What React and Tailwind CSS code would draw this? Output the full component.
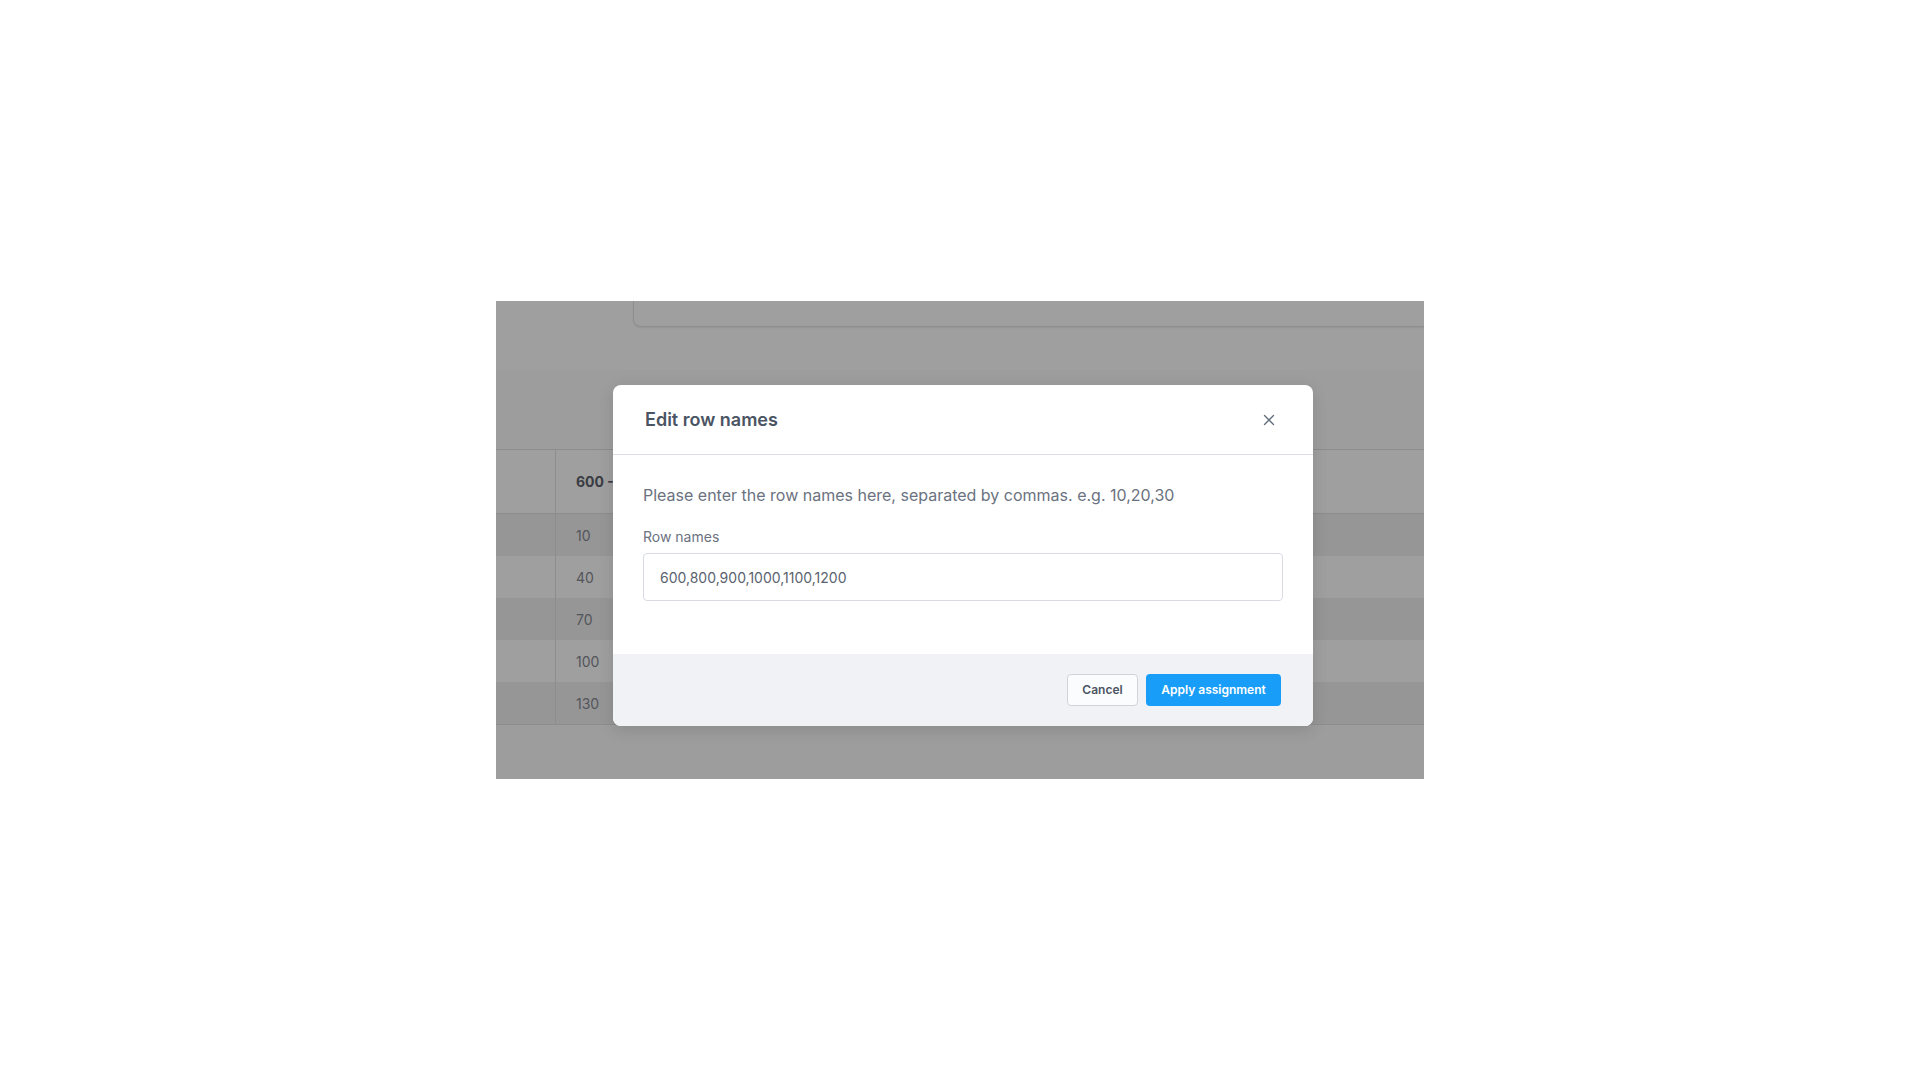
import React from "react";

const rows = ["10", "40", "70", "100", "130"];

function CloseIcon() {
  return (
    <svg width="12" height="12" viewBox="0 0 12 12" fill="none" stroke="currentColor" strokeWidth="1.3" strokeLinecap="round">
      <path d="M1.5 1.5 L10.5 10.5 M10.5 1.5 L1.5 10.5" />
    </svg>
  );
}

export default function App() {
  return (
    <div className="min-h-screen w-full bg-white pt-[301px] pl-[496px]" style={{ fontFamily: "Inter, 'Noto Sans', sans-serif" }}>
      <div className="relative w-[928px] h-[478px] overflow-hidden bg-[#fcfcfc]">
        {/* underlying page */}
        <div className="h-[69px] bg-white pl-[137px]">
          <div className="h-[26px] bg-white rounded-bl-lg border-l border-b border-[#e4e4e4] shadow-[0_1px_2px_rgba(0,0,0,0.08)]" />
        </div>
        <div className="h-[79px]" />
        <div className="border-t border-b border-[#e2e2e2] bg-white">
          <div className="flex h-[64px] border-b border-[#e2e2e2] bg-white">
            <div className="w-[60px] border-r border-[#e2e2e2]" />
            <div className="flex items-center pl-5 text-[14px] font-bold text-[#5c606b]">600 - 800</div>
          </div>
          {rows.map((r, i) => (
            <div key={r} className={`flex h-[42px] ${i % 2 === 0 ? "bg-[#f1f1f2]" : "bg-white"}`}>
              <div className="w-[60px] border-r border-[#e2e2e2]" />
              <div className="flex items-center pl-5 text-[14px] text-[#868a93]">{r}</div>
            </div>
          ))}
        </div>

        {/* overlay */}
        <div className="absolute inset-0 bg-[rgba(0,0,0,0.376)]" />

        {/* modal */}
        <div className="absolute left-[117px] top-[84px] w-[700px] rounded-[8px] bg-white shadow-[0_4px_16px_rgba(0,0,0,0.12)] overflow-hidden">
          <div className="flex h-[70px] items-center justify-between border-b border-[#dcdfe4] px-8">
            <h2 className="text-[18px] font-semibold text-[#4a5463]">Edit row names</h2>
            <button className="flex h-6 w-6 items-center justify-center text-[#5f6b7a]">
              <CloseIcon />
            </button>
          </div>
          <div className="px-[30px] pt-7 pb-[53px]">
            <p className="text-[16px] leading-6 text-[#6b7280]">
              Please enter the row names here, separated by commas. e.g. 10,20,30
            </p>
            <label className="mt-5 block text-[14px] leading-5 text-[#6b7280]">Row names</label>
            <input
              readOnly
              value="600,800,900,1000,1100,1200"
              className="mt-[6px] block h-[48px] w-full rounded-[4px] border border-[#d8dce2] bg-white px-4 text-[14px] text-[#5b6370] outline-none"
            />
          </div>
          <div className="flex h-[72px] items-center justify-end gap-2 bg-[#f0f2f5] px-8">
            <button className="h-[32px] w-[71px] rounded-[4px] border border-[#cfd4da] bg-[#fbfcfd] text-[12px] font-semibold text-[#4b5563]">
              Cancel
            </button>
            <button className="h-[32px] w-[135px] rounded-[4px] bg-[#189ef8] text-[12px] font-semibold text-white">
              Apply assignment
            </button>
          </div>
        </div>
      </div>
    </div>
  );
}
